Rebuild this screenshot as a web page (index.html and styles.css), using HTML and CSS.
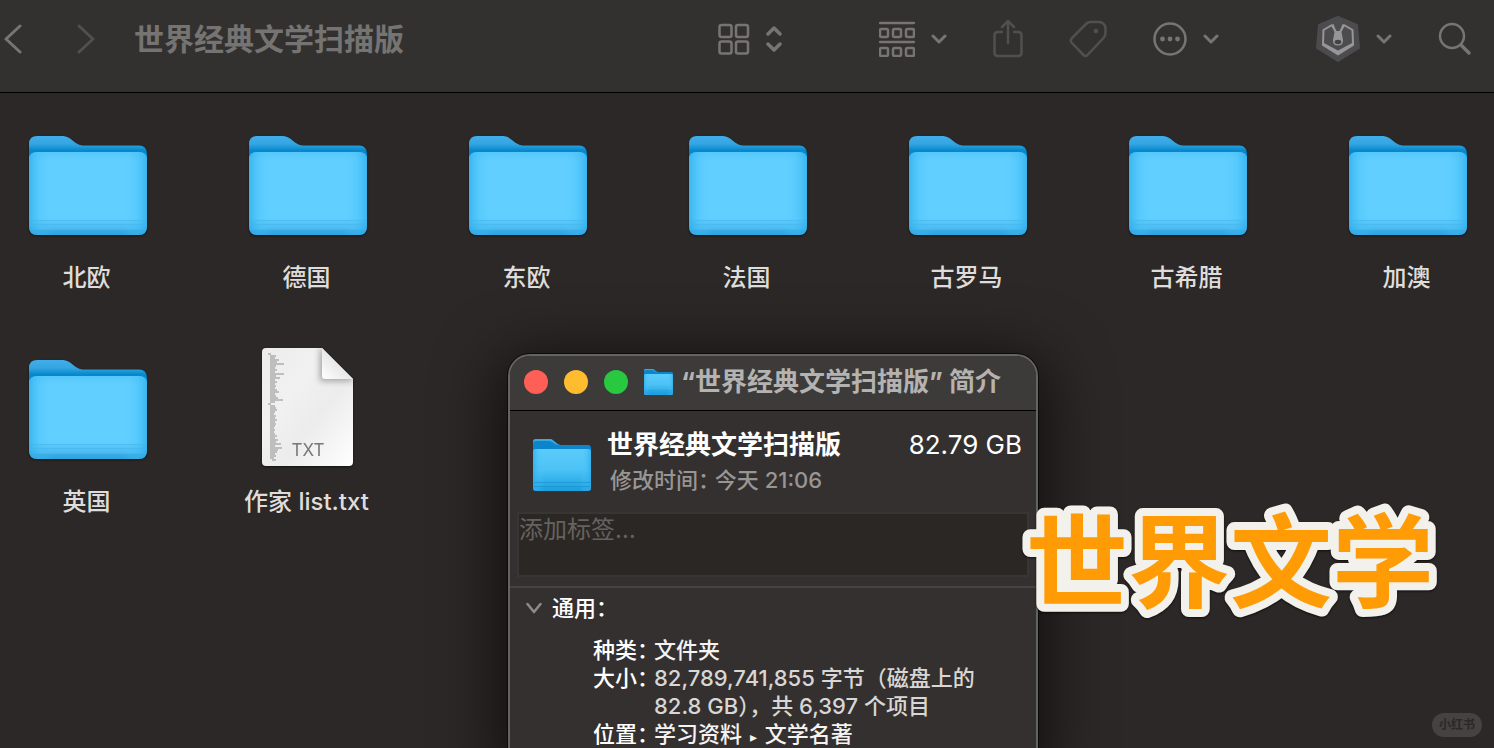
FILE: index.html
```html
<!DOCTYPE html>
<html lang="zh-CN">
<head>
<meta charset="utf-8">
<meta name="viewport" content="width=device-width, initial-scale=1">
<title>世界经典文学扫描版</title>
<link rel="stylesheet" href="styles.css">
</head>
<body>
<svg class="defs" width="0" height="0" aria-hidden="true">
  <defs>
    <linearGradient id="back" x1="0" y1="0" x2="0" y2="1">
      <stop offset="0" stop-color="#40aee9"/><stop offset=".09" stop-color="#34a5e2"/><stop offset=".16" stop-color="#0788cc"/><stop offset="1" stop-color="#0788cc"/>
    </linearGradient>
    <linearGradient id="front" x1="0" y1="0" x2="0" y2="1">
      <stop offset="0" stop-color="#55c7fb"/><stop offset=".1" stop-color="#61cfff"/><stop offset=".8" stop-color="#61cfff"/><stop offset=".86" stop-color="#55c4f6"/><stop offset=".93" stop-color="#4bbaf0"/><stop offset=".94" stop-color="#37ace6"/><stop offset="1" stop-color="#2ea4df"/>
    </linearGradient>
    <linearGradient id="sides">
      <stop offset="0" stop-color="#27aae9" stop-opacity=".7"/><stop offset=".09" stop-color="#42bdf6" stop-opacity=".3"/><stop offset=".2" stop-color="#61cfff" stop-opacity="0"/><stop offset=".8" stop-color="#61cfff" stop-opacity="0"/><stop offset=".91" stop-color="#42bdf6" stop-opacity=".3"/><stop offset="1" stop-color="#27aae9" stop-opacity=".7"/>
    </linearGradient>
    <linearGradient id="smallfront" x1="0" y1="0" x2="0" y2="1">
      <stop offset="0" stop-color="#5ccbfa"/><stop offset=".5" stop-color="#4cc2f6"/><stop offset="1" stop-color="#1a9edc"/>
    </linearGradient>
    <linearGradient id="paper" x1="0" y1="0" x2="1" y2="1">
      <stop offset="0" stop-color="#ececec"/><stop offset=".35" stop-color="#f1f1f1"/><stop offset=".6" stop-color="#ececec"/><stop offset="1" stop-color="#fff"/>
    </linearGradient>
    <linearGradient id="fold" x1="0" y1="1" x2=".6" y2=".4">
      <stop offset="0" stop-color="#fff"/><stop offset="1" stop-color="#e3e3e3"/>
    </linearGradient>
    <filter id="soft" x="-50%" y="-50%" width="200%" height="200%"><feGaussianBlur stdDeviation="3"/></filter>
    <clipPath id="page"><path d="M4 0H60L91 31V114a4 4 0 0 1-4 4H4a4 4 0 0 1-4-4V4a4 4 0 0 1 4-4Z"/></clipPath>
    <symbol id="folder" viewBox="0 0 118 99">
      <path fill="url(#back)" d="M0 8Q0 0 8 0H34C42 0 45 9 54 9.500H110Q118 9.500 118 18V90H0Z"/>
      <path fill="url(#front)" d="M8 16H110Q118 16 118 24V90Q118 99 110 99H8Q0 99 0 90V24Q0 16 8 16Z"/>
      <path fill="url(#sides)" d="M8 16H110Q118 16 118 24V90Q118 99 110 99H8Q0 99 0 90V24Q0 16 8 16Z"/>
      <path stroke="#42b6ee" stroke-opacity=".6" d="M1 84.500H117M1 88.500H117"/>
    </symbol>
    <symbol id="folder-small" viewBox="0 0 58 52">
      <path fill="#0b86cc" d="M0 3Q0 0 3 0H17C21 0 23 6 28 6H55Q58 6 58 9V45H0Z"/>
      <path fill="#3aa9e2" d="M0 3Q0 0 3 0H17C21 0 23 6 28 6H26C21 6 20 2 16 2H3Q0 2 0 5Z"/>
      <path fill="url(#smallfront)" d="M3 10H55Q58 10 58 13V49Q58 52 55 52H3Q0 52 0 49V13Q0 10 3 10Z"/>
      <path fill="url(#sides)" d="M3 10H55Q58 10 58 13V49Q58 52 55 52H3Q0 52 0 49V13Q0 10 3 10Z"/>
      <path stroke="#1591cf" stroke-opacity=".6" d="M1 43.500H57M1 47.500H57"/>
    </symbol>
    <symbol id="chevron" viewBox="0 0 16 10"><path d="M2 2L8 8L14 2" fill="none" stroke="currentColor" stroke-width="3" stroke-linecap="round" stroke-linejoin="round"/></symbol>
  </defs>
</svg>

<header class="toolbar">
  <nav class="history">
    <button class="tool" type="button" aria-label="后退"><svg width="18" height="30" viewBox="0 0 18 30"><path d="M16 2L2 15L16 28" class="line thick"/></svg></button>
    <button class="tool dim" type="button" aria-label="前进"><svg width="18" height="30" viewBox="0 0 18 30"><path d="M2 2L16 15L2 28" class="line thick"/></svg></button>
  </nav>
  <h1 class="title">世界经典文学扫描版</h1>
  <button class="tool" type="button" aria-label="显示方式">
    <svg width="32" height="32" viewBox="0 0 32 32"><g class="line"><rect x="1.500" y="2" width="12" height="12" rx="2"/><rect x="18" y="2" width="12" height="12" rx="2"/><rect x="1.500" y="18.500" width="12" height="12" rx="2"/><rect x="18" y="18.500" width="12" height="12" rx="2"/></g></svg>
    <svg width="16" height="28" viewBox="0 0 16 28"><path class="line bold" d="M2 9L8 3L14 9M2 19L8 25L14 19"/></svg>
  </button>
  <button class="tool spaced" type="button" aria-label="分组方式">
    <svg width="36" height="36" viewBox="0 0 36 36"><g class="line"><path d="M1 2H35M1 21H35"/><rect x="1" y="8" width="8" height="8" rx="1.500"/><rect x="14" y="8" width="8" height="8" rx="1.500"/><rect x="27" y="8" width="8" height="8" rx="1.500"/><rect x="1" y="27" width="8" height="8" rx="1.500"/><rect x="14" y="27" width="8" height="8" rx="1.500"/><rect x="27" y="27" width="8" height="8" rx="1.500"/></g></svg>
    <svg width="16" height="10"><use href="#chevron"/></svg>
  </button>
  <button class="tool dim" type="button" aria-label="共享"><svg width="30" height="40" viewBox="0 0 30 40"><path class="line" d="M9 13H5Q1.500 13 1.500 16.500V33.500Q1.500 37 5 37H25Q28.500 37 28.500 33.500V16.500Q28.500 13 25 13H21M15 24V2M9 8L15 2L21 8"/></svg></button>
  <button class="tool dim" type="button" aria-label="标签"><svg width="38" height="38" viewBox="0 0 38 38"><path class="line" d="M21.500 2H31Q36 3.500 36.500 8V13Q36.500 16 34.500 18L18.500 35Q16.500 37 14.500 35L2.500 22.500Q1 20.500 2.500 18.500L17 4Q19 2 21.500 2Z"/><circle cx="27" cy="11" r="2.300" fill="currentColor"/></svg></button>
  <button class="tool" type="button" aria-label="更多">
    <svg width="34" height="34" viewBox="0 0 34 34"><circle class="line" cx="17" cy="17" r="15.500"/><g fill="currentColor"><circle cx="9.500" cy="17" r="2.400"/><circle cx="17" cy="17" r="2.400"/><circle cx="24.500" cy="17" r="2.400"/></g></svg>
    <svg width="16" height="10"><use href="#chevron"/></svg>
  </button>
  <button class="tool spaced" type="button" aria-label="扩展">
    <svg width="44" height="46" viewBox="0 0 44 46"><path fill="#4c4b4d" stroke="#4c4b4d" stroke-width="2" stroke-linejoin="round" d="M22 1L41 9L43 32L22 45L1 32L3 9Z"/><path fill="none" stroke="#969597" stroke-width="2" stroke-linejoin="round" d="M16 9L7.500 14L7 28L22 37L37 28L36.500 14L28 9"/><path fill="#969597" d="M6 26L22 34.500V39.500L6 29.500ZM38 26L22 34.500V39.500L38 29.500Z"/><path fill="#969597" d="M14.500 9L17.500 8L19 12L20.500 15H23.500L25 12L26.500 8L29.500 9L27 13L25.500 16L27 24Q27.500 29.500 22 29.500Q16.500 29.500 17 24L18.500 16L17 13Z"/><ellipse cx="22" cy="26" rx="3.300" ry="2.200" fill="#434244"/></svg>
    <svg width="16" height="10"><use href="#chevron"/></svg>
  </button>
  <button class="tool" type="button" aria-label="搜索"><svg width="34" height="34" viewBox="0 0 34 34"><circle class="line" cx="14" cy="14" r="12"/><path class="line bold" d="M23 23L31 31"/></svg></button>
</header>

<main class="files">
  <figure class="file"><div class="art"><svg class="folder"><use href="#folder"/></svg></div><figcaption>北欧</figcaption></figure>
  <figure class="file"><div class="art"><svg class="folder"><use href="#folder"/></svg></div><figcaption>德国</figcaption></figure>
  <figure class="file"><div class="art"><svg class="folder"><use href="#folder"/></svg></div><figcaption>东欧</figcaption></figure>
  <figure class="file"><div class="art"><svg class="folder"><use href="#folder"/></svg></div><figcaption>法国</figcaption></figure>
  <figure class="file"><div class="art"><svg class="folder"><use href="#folder"/></svg></div><figcaption>古罗马</figcaption></figure>
  <figure class="file"><div class="art"><svg class="folder"><use href="#folder"/></svg></div><figcaption>古希腊</figcaption></figure>
  <figure class="file"><div class="art"><svg class="folder"><use href="#folder"/></svg></div><figcaption>加澳</figcaption></figure>
  <figure class="file"><div class="art"><svg class="folder"><use href="#folder"/></svg></div><figcaption>英国</figcaption></figure>
  <figure class="file">
    <div class="art"><svg class="document" viewBox="0 0 91 118">
      <g clip-path="url(#page)">
        <rect width="91" height="118" fill="url(#paper)"/>
        <path d="M58 0V33H93L60 0Z" fill="#777" opacity=".65" filter="url(#soft)"/>
      </g>
      <path d="M60 0L91 31H63Q60 31 60 28Z" fill="url(#fold)"/>
      <path fill="none" stroke="#8d8d8d" stroke-width="1.200" d="M6 6h3M8 8h6M8 10h5M8 12h9M8 14h7M8 16h14M8 18h6M8 20h5M8 22h7M8 24h5M8 26h14M8 28h6M8 30h10M8 32h5M8 34h7M8 36h5M8 38h6M8 40h5M8 42h7M8 44h9M8 46h5M8 48h6M8 50h8M8 52h13M8 54h5M6 56h3M8 58h5M8 60h6M8 62h7M8 64h5M8 66h4M8 68h6M8 70h5M8 72h7M8 74h5M8 76h6M8 78h5M8 80h4M8 82h5M8 84h4M8 86h5M8 88h7M8 90h5M8 92h8M8 94h6M8 96h11M8 98h5M8 100h12M8 102h8M8 104h7M8 106h5M8 108h6M8 110h4M10 112h4"/>
      <text x="46" y="108" class="doc-type">TXT</text>
    </svg></div>
    <figcaption>作家 list.txt</figcaption>
  </figure>
</main>

<section class="info" aria-labelledby="info-title">
  <header class="info-bar">
    <button class="light red" type="button" aria-label="关闭"></button>
    <button class="light yellow" type="button" aria-label="最小化"></button>
    <button class="light green" type="button" aria-label="缩放"></button>
    <svg class="bar-folder"><use href="#folder-small"/></svg>
    <h2 id="info-title">“世界经典文学扫描版” 简介</h2>
  </header>
  <div class="summary">
    <svg class="summary-folder"><use href="#folder-small"/></svg>
    <div class="summary-text">
      <div class="summary-head"><strong>世界经典文学扫描版</strong><span>82.79 GB</span></div>
      <p>修改时间： 今天 21:06</p>
    </div>
  </div>
  <textarea class="tags" aria-label="标签" placeholder="添加标签…"></textarea>
  <div class="general">
    <button class="disclosure" type="button" aria-expanded="true"><svg width="16" height="12" viewBox="0 0 16 12"><path class="line" d="M1.500 2L8 10L14.500 2"/></svg><span>通用：</span></button>
    <dl>
      <dt>种类：</dt><dd class="strong">文件夹</dd>
      <dt>大小：</dt><dd>82,789,741,855 字节（磁盘上的 82.8 GB），共 6,397 个项目</dd>
      <dt>位置：</dt><dd class="strong">学习资料 <span class="crumb">▸</span> 文学名著</dd>
    </dl>
  </div>
</section>

<svg class="banner" width="440" height="168" viewBox="0 0 440 168" role="img" aria-label="世界文学"><text x="16" y="126">世界文学</text></svg>
<div class="watermark">小红书</div>
</body>
</html>
```
FILE: styles.css
```css
* { box-sizing: border-box; }

body {
  margin: 0;
  min-height: 100vh;
  position: relative;
  overflow: hidden;
  background: #2c2827;
  color: #dfdddb;
  font-family: Inter, "Noto Sans CJK SC", sans-serif;
}

h1, h2, p, dl, dd, figure { margin: 0; }

button {
  padding: 0;
  border: 0;
  background: none;
  color: inherit;
  font: inherit;
}

svg { display: block; flex: none; }
.defs { position: absolute; }

.line {
  fill: none;
  stroke: currentColor;
  stroke-width: 2.5;
  stroke-linecap: round;
  stroke-linejoin: round;
}
.thick { stroke-width: 3; }
.bold { stroke-width: 3.5; }

/* Toolbar */
.toolbar {
  display: flex;
  align-items: center;
  gap: 46px;
  height: 93px;
  padding: 0 22px 14px 4px;
  background: #33312f;
  border-bottom: 1px solid #000;
}
.history { display: flex; gap: 55px; }
.title {
  margin-left: -7px;
  margin-right: auto;
  color: #767472;
  font-size: 30px;
  font-weight: 700;
  line-height: 40px;
  white-space: nowrap;
}
.tool {
  display: flex;
  align-items: center;
  gap: 16px;
  color: #777573;
}
.tool.dim { color: #52504e; }
.tool.spaced { margin-left: 51px; }

/* Icon grid */
.files {
  display: grid;
  grid-template-columns: repeat(7, minmax(0, 1fr));
  gap: 52px 48px;
  padding: 28px 0 0 2px;
}
.file { text-align: center; }
.art {
  display: flex;
  align-items: center;
  justify-content: center;
  height: 128px;
  margin-bottom: 14px;
  filter: drop-shadow(0 1px 1px #0008);
}
.folder { width: 118px; height: 99px; }
.document { width: 91px; height: 118px; margin: 0 2px 4px 0; }
.doc-type {
  fill: #777;
  font-size: 17px;
  text-anchor: middle;
}
.file figcaption {
  padding-right: 3px;
  font-size: 24px;
  font-weight: 500;
  line-height: 30px;
  white-space: nowrap;
}

/* Info window */
.info {
  position: absolute;
  top: 354px;
  bottom: -24px;
  left: 508px;
  width: 530px;
  overflow: hidden;
  background: #34302f;
  border: 2px solid #666462;
  border-radius: 22px;
  box-shadow: 0 0 0 1px #0b0b0b, 0 12px 60px 12px #0009;
}
.info-bar {
  display: flex;
  align-items: center;
  gap: 16px;
  height: 55px;
  padding: 0 14px 3px;
  background: #3d3b39;
  border-bottom: 1px solid #000;
}
.info-bar h2 {
  margin-left: -8px;
  color: #b5b3b1;
  font-size: 26px;
  font-weight: 700;
  line-height: 36px;
  white-space: nowrap;
}
.light {
  flex: none;
  width: 24px;
  height: 24px;
  border-radius: 50%;
}
.red { background: #ff5f57; }
.yellow { background: #febc2e; }
.green { background: #28c840; }
.bar-folder { width: 29px; height: 26px; }

.summary {
  display: flex;
  gap: 16px;
  padding: 16px 14px 0 23px;
}
.summary-folder { width: 58px; height: 52px; margin-top: 12px; }
.summary-text { flex: 1; }
.summary-head {
  display: flex;
  justify-content: space-between;
  color: #fff;
  font-size: 26px;
  line-height: 36px;
  white-space: nowrap;
}
.summary-text p {
  padding-left: 3px;
  color: #989694;
  font-size: 22px;
  font-weight: 500;
  line-height: 34px;
  font-feature-settings: "halt";
}
.tags {
  display: block;
  width: calc(100% - 14px);
  height: 65px;
  margin: 15px 7px 9px;
  padding: 0;
  border: 2px solid #383634;
  background: #2b2724;
  color: #dfdddb;
  font: 24px/32px Inter, "Noto Sans CJK SC", sans-serif;
  resize: none;
  overflow: hidden;
}
.tags::placeholder { color: #65625f; opacity: 1; }

.general {
  padding: 6px 14px 0 16px;
  border-top: 2px solid #454341;
  font-size: 22px;
  font-weight: 500;
  line-height: 28px;
}
.disclosure {
  display: flex;
  align-items: center;
  gap: 10px;
  color: #fff;
  line-height: 28px;
  font-feature-settings: "halt";
}
.disclosure svg { color: #8d8b89; }
.general dl {
  display: grid;
  grid-template-columns: max-content 330px;
  column-gap: 6px;
  padding: 14px 0 0 67px;
}
.general dt { color: #fff; font-feature-settings: "halt"; }
.general dd { color: #d9d7d5; }
.general .strong { color: #f4f3f2; }
.crumb { margin: 0 2px; font-size: 14px; }

/* Caption sticker */
.banner {
  position: absolute;
  top: 474px;
  right: 44px;
  filter: drop-shadow(0 1px 1px #000a);
}
.banner text {
  fill: #ff9b05;
  stroke: #f3f1eb;
  stroke-width: 16px;
  stroke-linejoin: round;
  paint-order: stroke fill;
  font-family: "Noto Sans CJK SC", sans-serif;
  font-size: 102px;
  font-weight: 700;
}
.watermark {
  position: absolute;
  right: 12px;
  bottom: 11px;
  padding: 0 7px;
  border-radius: 12px;
  background: #454241;
  color: #2b2827;
  font-size: 12px;
  font-weight: 700;
  line-height: 24px;
}
```
